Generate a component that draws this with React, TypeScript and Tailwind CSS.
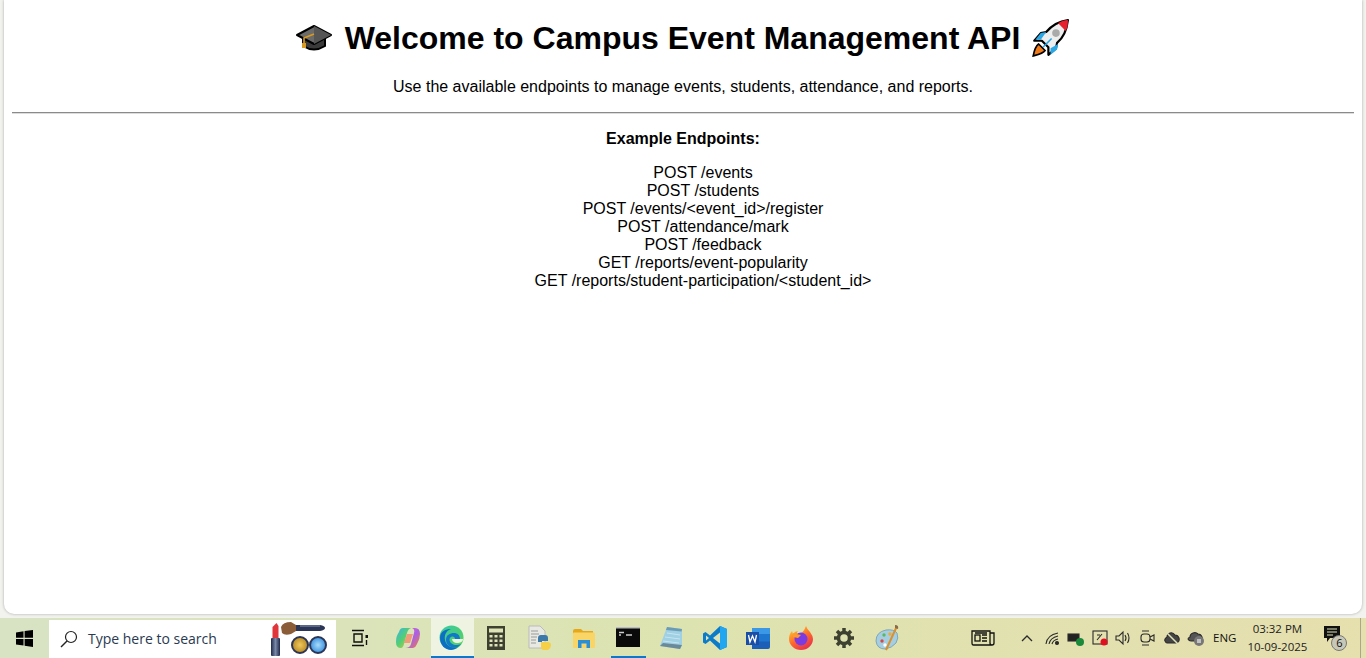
import React from "react";

const Cap = () => (
  <svg width="38" height="30" viewBox="0 0 38 30" className="shrink-0 -ml-[2px] mr-[2px]">
    <path d="M8 14v9q11 7 22 0v-9z" fill="#3a3a3a" stroke="#000" strokeWidth="2" />
    <path d="M19 3 36 12 19 21 2 12z" fill="#6b6b6b" stroke="#000" strokeWidth="2" strokeLinejoin="round" />
    <path d="M19 21 36 12 19 3z" fill="#555" />
    <path d="M19 11 9 15v7" fill="none" stroke="#d99a22" strokeWidth="1.6" />
    <rect x="7" y="20" width="4" height="5" fill="#d99a22" />
  </svg>
);

const Rocket = () => (
  <svg width="38" height="38" viewBox="2 1 35 35" className="shrink-0 ml-[1px]">
    <path d="M36 2c-8 1-15 5-20 11l-5 1-6 7 7 0 6 6 0 7 7-6 1-5c6-5 9-12 10-21z" fill="#eee" stroke="#000" strokeWidth="2" strokeLinejoin="round" />
    <path d="M36 2c-3 0-6 1-9 3l7 7c2-3 2-7 2-10z" fill="#e8202e" />
    <path d="M16 13l-5 1-5 6 5 0zM27 24l-1 5-6 5 0-6z" fill="#2aa8e6" />
    <path d="M9 24c-3 2-4 6-5 11 4-1 9-2 11-5z" fill="#ef7a1a" stroke="#000" strokeWidth="1.5" />
    <circle cx="25" cy="14" r="3.5" fill="#aaa" />
    <path d="M13 27l8-8" stroke="#2aa8e6" strokeWidth="1.5" />
  </svg>
);

const Win = () => (
  <svg width="17" height="17" viewBox="0 0 17 17"><path d="M0 2.5 7.5 1.3v6.5H0zM8.6 1.1 17 0v7.8H8.6zM0 9h7.5v6.6L0 14.5zM8.6 9H17v8l-8.4-1.2z" fill="#000" /></svg>
);

const Makeup = () => (
  <svg width="58" height="36" viewBox="0 0 58 36">
    <defs>
      <linearGradient id="mkb" x1="0" y1="0" x2="1" y2="0"><stop offset="0" stopColor="#1f2a48" /><stop offset="0.5" stopColor="#7a88a8" /><stop offset="1" stopColor="#1f2a48" /></linearGradient>
      <radialGradient id="mkg"><stop offset="0" stopColor="#f0c860" /><stop offset="1" stopColor="#b88a20" /></radialGradient>
      <radialGradient id="mkc"><stop offset="0" stopColor="#a8dcf8" /><stop offset="1" stopColor="#3a90e0" /></radialGradient>
    </defs>
    <rect x="1" y="17" width="9" height="18" rx="1" fill="url(#mkb)" />
    <path d="M2.500 17V6l4-4 2 3v12z" fill="#e0353b" />
    <path d="M11 6q2-5 10-5l5 3v6l-5 3q-6 2-9-1z" fill="#8a5c38" />
    <path d="M26 4h24q5 1 5 3t-5 3H26z" fill="#2b3555" />
    <path d="M30 5h20" stroke="#8f9bb8" strokeWidth="1" />
    <circle cx="30" cy="24" r="8" fill="url(#mkg)" stroke="#2b3555" strokeWidth="2" />
    <circle cx="48" cy="24" r="8" fill="url(#mkc)" stroke="#2b3555" strokeWidth="2" />
  </svg>
);

const TaskView = () => (
  <svg width="18" height="18" viewBox="0 0 18 18" fill="none" stroke="#111" strokeWidth="1.4">
    <path d="M1 1.5h12M1 16.5h12M3 5h8v8H3z" /><rect x="14.5" y="6" width="2.5" height="3" fill="#111" stroke="none" />
    <path d="M15.5 11v5" />
  </svg>
);

const Copilot = () => (
  <svg width="24" height="24" viewBox="0 0 24 24">
    <defs>
      <linearGradient id="cp1" x1="0" y1="0" x2="1" y2="1"><stop offset="0" stopColor="#35b4ea" /><stop offset="0.5" stopColor="#55cf70" /><stop offset="1" stopColor="#f6c33c" /></linearGradient>
      <linearGradient id="cp2" x1="0" y1="0" x2="1" y2="1"><stop offset="0" stopColor="#f06ab0" /><stop offset="0.5" stopColor="#a860e8" /><stop offset="1" stopColor="#f27a3c" /></linearGradient>
    </defs>
    <path d="M7 2h8q-3 1-4 5l-3 11q-1 4-3 4H5Q0 22 0 16 0 10 3 6q1-4 4-4z" fill="url(#cp1)" />
    <path d="M9 22h8q3-1 4-4 3-5 3-10 0-6-5-6h-3q3 1 2 5l-3 11q-1 4-6 4z" fill="url(#cp2)" />
    <path d="M11 8h6l-3 9H8z" fill="#f58a6a" opacity="0.8" />
  </svg>
);

const Edge = () => (
  <svg width="25" height="25" viewBox="0 0 25 25" className="-ml-[2px]">
    <defs>
      <linearGradient id="ed1" x1="0" y1="0" x2="1" y2="1"><stop offset="0" stopColor="#37c9a5" /><stop offset="1" stopColor="#5ad25a" /></linearGradient>
    </defs>
    <circle cx="12.5" cy="12.5" r="12" fill="url(#ed1)" />
    <path d="M1 13C1 6 7 4 12 4c-5 2-7 6-6 11 1 5 6 9 13 7-2 2-5 3-7 3C6 25 1 20 1 13z" fill="#0d6fc4" />
    <path d="M7 15c0-5 4-7 8-7 3 0 6 2 6 6h-5c0-2-2-3-4-2-2 1-2 4 0 6 2 2 6 3 10 1-2 3-6 5-10 3-3-1-5-4-5-7z" fill="#1278c8" />
    <path d="M13 14h11c0 3-3 4-6 4s-5-2-5-4z" fill="#eff3e2" />
  </svg>
);

const Calc = () => (
  <svg width="18" height="24" viewBox="0 0 18 24">
    <rect width="18" height="24" fill="#3e4030" />
    <rect x="2" y="2.5" width="14" height="4" fill="#dfe4b8" />
    {[9, 13.5, 18].map((y) =>
      [2.5, 7.5, 12.5].map((x) => <rect key={`${x}-${y}`} x={x} y={y} width="3" height="2.5" fill="#dfe4b8" />)
    )}
  </svg>
);

const PyFile = () => (
  <svg width="24" height="26" viewBox="0 0 24 26">
    <path d="M1 1h11l5 5v17H1z" fill="#e9e9e4" stroke="#bbb" />
    <path d="M3 6h7M3 9h8M3 12h6M3 15h5M3 18h5" stroke="#999" />
    <path d="M10 13q0-3 3-3h4q3 0 3 3v3h-6v1h-4z" fill="#3c78a8" />
    <path d="M13 20v-3h6q4 0 4 3t-3 5h-4q-3 0-3-3z" fill="#f5cf45" />
  </svg>
);

const Folder = () => (
  <svg width="22" height="19" viewBox="0 0 22 19">
    <path d="M0 2q0-2 2-2h6l2 2h10v3H0z" fill="#e6a819" />
    <rect y="3.5" width="22" height="15.5" rx="1" fill="#f9d567" />
    <path d="M5 19v-8h12v8h-3.5v-4.5h-5V19z" fill="#2b8fd8" />
  </svg>
);

const Cmd = () => (
  <svg width="24" height="20" viewBox="0 0 24 20" className="-ml-[2px]">
    <rect width="24" height="20" fill="#0a0a0a" />
    <rect width="24" height="1.5" fill="#b9bcc0" />
    <path d="M3 5.500h5M3 8h2M10 8h6" stroke="#ccc" strokeWidth="1.300" />
  </svg>
);

const Notepad = () => (
  <svg width="24" height="24" viewBox="0 0 24 24">
    <path d="M8 1 23 3v16l-2 4-20-3z" fill="#9fd0e4" />
    <path d="M8 1 23 3l-.5 2.5L7 4z" fill="#6c9cb4" />
    <path d="M8 7l13 2M6 11l15 2M4 15l16 2" stroke="#c8e4ee" />
    <path d="M1 20 21 23l2-4-19-2z" fill="#6a8a9a" />
  </svg>
);

const VSCode = () => (
  <svg width="24" height="24" viewBox="0 0 24 24">
    <path d="M17 0 24 3v18l-7 3L7 14.500 2.500 18 0 16.500V7.500L2.500 6 7 9.500z" fill="#0c7cc9" />
    <path d="M17 0 24 3v18l-7 3z" fill="#22a6f0" />
    <path d="M17 6.500 10 12l7 5.500z" fill="#dfe4b8" />
    <path d="M3 9.500 6 12l-3 2.500z" fill="#dfe4b8" />
  </svg>
);

const Word = () => (
  <svg width="24" height="23" viewBox="0 0 24 23">
    <path d="M6 1h16q2 0 2 2v17q0 2-2 2H6z" fill="#1b5fb8" />
    <path d="M6 1h18v6H6z" fill="#3a98e6" />
    <path d="M6 7h18v7.500H6z" fill="#1f76cf" />
    <rect y="5" width="13" height="13" fill="#1a4ea6" />
    <path d="M2.500 8l1.500 7 2.500-6 2.500 6 1.500-7" fill="none" stroke="#fff" strokeWidth="1.300" />
  </svg>
);

const Firefox = () => (
  <svg width="24" height="24" viewBox="0 0 24 24">
    <defs>
      <linearGradient id="ff" x1="0.2" y1="0" x2="0.8" y2="1"><stop offset="0" stopColor="#ffcb2e" /><stop offset="0.5" stopColor="#ff6a2b" /><stop offset="1" stopColor="#e22a55" /></linearGradient>
    </defs>
    <path d="M17 0q1 3 4 6 3 4 3 7a12 11 0 0 1-24 0Q0 8 3 5l1 3q2-3 5-3-2 2 0 3 5 0 8-8z" fill="url(#ff)" />
    <circle cx="12" cy="13" r="6.500" fill="#7a3ce0" />
    <path d="M4 7c2 1 5 1 8 2l-3 3-5-1z" fill="#ff9a2b" />
  </svg>
);

const Gear = () => (
  <svg width="20" height="20" viewBox="0 0 20 20">
    <circle cx="10" cy="10" r="5.500" fill="none" stroke="#3e4030" strokeWidth="3.500" />
    <path d="M10 0v4M10 16v4M0 10h4M16 10h4M3 3l2.800 2.800M14.200 14.200 17 17M17 3l-2.800 2.800M5.800 14.200 3 17" stroke="#3e4030" strokeWidth="3.500" />
  </svg>
);

const Paint = () => (
  <svg width="24" height="26" viewBox="0 0 24 26">
    <path d="M1 16Q1 7 11 5q8-1 11 3 2 5-1 10-4 5-11 6-8 0-9-8z" fill="#a5cfe0" stroke="#7fa6ba" />
    <circle cx="7" cy="16" r="1.700" fill="#d8484a" /><circle cx="9" cy="10" r="1.700" fill="#5cb85c" />
    <circle cx="15" cy="9" r="1.700" fill="#f0a830" /><circle cx="10" cy="20" r="1.700" fill="#fff" />
    <path d="M22 1 11 25" stroke="#d89030" strokeWidth="2" />
    <path d="M20 0q4 0 3 4l-3-1z" fill="#8a6a4a" />
  </svg>
);

const News = () => (
  <svg width="24" height="16" viewBox="0 0 24 16" fill="none" stroke="#111" strokeWidth="1.300">
    <path d="M19 3h4v10q0 2-2 2H2.500Q1 15 1 13V1h18v12q0 2 2 2" />
    <rect x="4" y="5" width="5" height="6" /><path d="M4 3h12M11 5h5M11 8h5M11 11h5" />
  </svg>
);

const Tray = ({ children, w = 18 }: { children: React.ReactNode; w?: number }) => (
  <svg width={w} height="18" viewBox={`0 0 ${w} 18`} fill="none" stroke="#2b2b2b" strokeWidth="1.100">{children}</svg>
);

const App = () => {
  const endpoints = [
    "POST /events",
    "POST /students",
    "POST /events/<event_id>/register",
    "POST /attendance/mark",
    "POST /feedback",
    "GET /reports/event-popularity",
    "GET /reports/student-participation/<student_id>",
  ];
  return (
    <div className="h-[658px] w-[1366px] flex flex-col overflow-hidden bg-[#f2f3ef] font-['Liberation_Sans',sans-serif]">
      <div className="h-[618px] shrink-0 pl-[4px] pr-[4px] pb-[4px]">
        <main className="h-[614px] bg-white rounded-b-[10px] shadow-[0_0_3px_rgba(0,0,0,0.3)] text-black text-center px-[8px]">
          <h1 className="flex items-center justify-center h-[38px] pt-[19px] box-content text-[32px] leading-[37px] font-bold gap-[10px]">
            <Cap />
            <span>Welcome to Campus Event Management API</span>
            <Rocket />
          </h1>
          <p className="mt-[21px] text-base leading-[18px]">Use the available endpoints to manage events, students, attendance, and reports.</p>
          <hr className="mt-[16px] border-t border-b border-t-[#8a8a8a] border-b-[#dcdcdc] h-[2px]" />
          <p className="mt-[16px] text-base leading-[18px] font-bold">Example Endpoints:</p>
          <ul className="mt-[16px] text-base leading-[18px] pl-[40px]">
            {endpoints.map((e) => (
              <li key={e}>{e}</li>
            ))}
          </ul>
        </main>
      </div>
      <footer className="h-[40px] flex items-center text-[#111] bg-gradient-to-r from-[#d8e3c4] via-[#dde3b0] to-[#e6dfae] font-['Open_Sans',sans-serif]">
        <div className="w-[49px] h-full flex items-center justify-center"><Win /></div>
        <div className="w-[287px] h-[38px] mt-[1px] bg-white flex items-center pl-[11px] relative">
          <svg width="18" height="18" viewBox="0 0 18 18" fill="none" stroke="#222" strokeWidth="1.200"><circle cx="11" cy="7" r="5.500" /><path d="M7 11l-6 6" strokeWidth="1.500" /></svg>
          <span className="ml-[10px] text-[14px] text-[#2a3a50]">Type here to search</span>
          <span className="absolute right-[8px] top-[1px]"><Makeup /></span>
        </div>
        <div className="w-[48px] flex justify-center"><TaskView /></div>
        <div className="w-[47px] flex justify-center"><Copilot /></div>
        <div className="w-[43px] h-full flex items-center justify-center bg-[#eff3e2] border-b-[2px] border-b-[#0a78d0]"><Edge /></div>
        <div className="w-[44px] flex justify-center"><Calc /></div>
        <div className="w-[44px] flex justify-center"><PyFile /></div>
        <div className="w-[43px] flex justify-center"><Folder /></div>
        <div className="w-[44px] h-full pl-[6px] pr-[3px]">
          <div className="h-full flex items-center justify-center border-b-[2px] border-b-[#0a78d0]"><Cmd /></div>
        </div>
        <div className="w-[44px] flex justify-center"><Notepad /></div>
        <div className="w-[43px] flex justify-center"><VSCode /></div>
        <div className="w-[43px] flex justify-center"><Word /></div>
        <div className="w-[43px] flex justify-center"><Firefox /></div>
        <div className="w-[43px] flex justify-center"><Gear /></div>
        <div className="w-[43px] flex justify-center"><Paint /></div>
        <div className="w-[87px] flex justify-end"><News /></div>
        <div className="flex items-center ml-[25px]">
          <Tray w={14}><path d="M2 12l5-5 5 5" strokeWidth="1.300" /></Tray>
          <span className="ml-[10px]"><Tray w={16}><path d="M2 15Q3 6 14 4M5 15Q6 9 14 7M8 15q1-4 6-5" /><circle cx="13" cy="14" r="1.500" fill="#2b2b2b" /></Tray></span>
          <span className="ml-[7px]"><Tray w={18}><rect x="1" y="5" width="11" height="7" fill="#222" /><circle cx="13" cy="13" r="4" fill="#1a8a3a" stroke="none" /></Tray></span>
          <span className="ml-[6px]"><Tray w={18}><rect x="2" y="2" width="14" height="13" /><path d="M6 11l5-6M6 6h3" /><circle cx="13" cy="13" r="3.500" fill="#e01020" stroke="none" /></Tray></span>
          <span className="ml-[6px]"><Tray w={17}><path d="M1 7h3l4-4v12l-4-4H1zM10 6q2 3 0 6M12.500 4q3 5 0 10" /></Tray></span>
          <span className="ml-[7px]"><Tray w={16}><rect x="2" y="5" width="9" height="8" rx="3" /><path d="M11 8l4-2v6l-4-2M3 2h7M3 16h7" /></Tray></span>
          <span className="ml-[8px]"><Tray w={17}><path d="M4 14h9q4-1 3-5-1-3-4-3-2-3-5-2-3 1-3 4-3 2-2 4 1 2 2 2z" fill="#444" /><path d="M3 3l12 12" stroke="#dfe4b8" strokeWidth="1.500" /></Tray></span>
          <span className="ml-[7px]"><Tray w={17}><path d="M4 12h9q3-1 2-4-1-3-4-3-2-2-5-1-3 1-3 4-2 1-2 2 1 2 3 2z" fill="#555" /><circle cx="12" cy="12" r="5" fill="#777" stroke="none" /><path d="M11 10v4M13 10v4" stroke="#fff" /></Tray></span>
          <span className="ml-[9px] text-[11.500px] leading-none">ENG</span>
        </div>
        <div className="ml-[8px] w-[66px] whitespace-nowrap text-center text-[11.500px] leading-[18px] text-[#222]">
          <div>03:32 PM</div>
          <div>10-09-2025</div>
        </div>
        <div className="relative ml-[14px] w-[24px] h-[26px] mt-[2px]">
          <svg width="18" height="18" viewBox="0 0 18 18" className="absolute left-0 top-0"><path d="M0 0h16v12H6l-3 4v-4H0z" fill="#111" /><path d="M3 3h10M3 6h10M3 9h6" stroke="#dfe4b8" /></svg>
          <span className="absolute left-[7px] top-[9px] w-[16px] h-[16px] rounded-full bg-[#c8c8b8] border border-[#777] text-[11px] leading-[14px] text-center text-[#111]">6</span>
        </div>
        <div className="ml-[12px] w-px h-full bg-[#a9a888]" />
      </footer>
    </div>
  );
};

export default App;
